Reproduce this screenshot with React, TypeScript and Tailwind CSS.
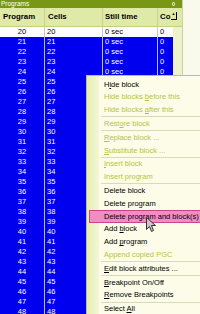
import React from "react";

const rows = Array.from({ length: 29 }, (_, i) => 20 + i);

type MenuItem = {
  pre: string;
  u?: string;
  post?: string;
  disabled?: boolean;
  active?: boolean;
  sepAfter?: boolean;
};

const menu: MenuItem[] = [
  { pre: "H", u: "i", post: "de block" },
  { pre: "Hide blocks ", u: "b", post: "efore this", disabled: true },
  { pre: "Hide blocks ", u: "a", post: "fter this", disabled: true, sepAfter: true },
  { pre: "Rest", u: "o", post: "re block", disabled: true, sepAfter: true },
  { pre: "", u: "R", post: "eplace block ...", disabled: true },
  { pre: "", u: "S", post: "ubstitute block ...", disabled: true, sepAfter: true },
  { pre: "", u: "I", post: "nsert block", disabled: true },
  { pre: "Insert program", disabled: true, sepAfter: true },
  { pre: "Delete block" },
  { pre: "Delete program" },
  { pre: "Delete program and block(s)", active: true },
  { pre: "Add ", u: "b", post: "lock" },
  { pre: "Add ", u: "p", post: "rogram" },
  { pre: "Append copied PGC", disabled: true, sepAfter: true },
  { pre: "", u: "E", post: "dit block attributes ...", sepAfter: true },
  { pre: "", u: "B", post: "reakpoint On/Off" },
  { pre: "", u: "R", post: "emove Breakpoints", sepAfter: true },
  { pre: "Select ", u: "A", post: "ll" },
];

export default function App() {
  return (
    <div
      className="relative w-[200px] h-[314px] overflow-hidden bg-[#f9faec] flex"
      style={{ fontFamily: '"Liberation Sans", Arial, sans-serif' }}
    >
      {/* Programs panel */}
      <div className="w-[183px] h-full flex flex-col bg-[#eef3cc] border-r border-[#c9d49a]">
        {/* Title bar */}
        <div className="h-[8px] bg-[#789815] flex items-center justify-between px-[1px] shrink-0">
          <span className="text-white text-[6.5px] leading-none">Programs</span>
          <span className="w-[3px] h-[4px] rounded-full border border-white mr-[6px]" />
        </div>

        {/* Header */}
        <div className="h-[19px] flex items-center bg-[#e0eaa8] text-black font-bold text-[7.8px] shrink-0 border-b border-[#c4d080]">
          <div className="w-[45px] pl-[3px] border-r border-[#c8d48c] h-full flex items-center">Program</div>
          <div className="w-[58px] pl-[3px] border-r border-[#c8d48c] h-full flex items-center">Cells</div>
          <div className="w-[55px] pl-[2px] border-r border-[#c8d48c] h-full flex items-center">Still time</div>
          <div className="w-[19px] pl-[2px] h-full flex items-center relative overflow-hidden">
            <span>Co</span>
            <span className="absolute right-0 top-[4px] w-[6px] h-[8px] border-r border-b border-black flex items-start justify-center text-[4px] leading-none bg-[#e0eaa8]">
              ▲
            </span>
          </div>
        </div>

        {/* Rows */}
        <div className="flex flex-col text-[7.5px]">
          {rows.map((n, i) => {
            const sel = i > 0;
            // rows from 25 on lie under the context menu on the right
            const covered = n >= 25;
            const line = sel ? "border-[#b8b8ff]" : "border-[#c8c8c8]";
            return (
              <div
                key={n}
                className={`h-[10px] w-[173px] flex items-center leading-none ${
                  sel ? "bg-[#0000ee] text-white" : "bg-white text-black"
                }`}
              >
                <div className={`w-[45px] h-full flex items-center justify-center border-r ${line}`}>{n}</div>
                <div className={`w-[58px] h-full flex items-center pl-[2px] border-r ${line}`}>{n}</div>
                <div className={`w-[55px] h-full flex items-center pl-[2px] border-r ${line}`}>
                  {covered ? "" : "0 sec"}
                </div>
                <div className="w-[15px] h-full flex items-center pl-[2px]">{covered ? "" : "0"}</div>
              </div>
            );
          })}
        </div>
      </div>

      {/* Context menu */}
      <div className="absolute left-[86px] top-[75px] w-[130px] bg-[#fcfce9] border border-[#b9c08e] flex text-[7.5px] leading-none">
        <div className="w-[12px] bg-gradient-to-r from-[#e6edb4] to-[#f4f7d6] shrink-0" />
        <div className="flex-1 flex flex-col pt-[2px]">
          {menu.map((m, i) => (
            <React.Fragment key={i}>
              <div
                className={`h-[12.8px] flex items-center -ml-[10px] ${
                  m.active ? "bg-[#f48ac6] border border-[#c8458a] pl-[14px]" : "pl-[15px]"
                } ${m.disabled ? "text-[#b5c43e]" : "text-black"}`}
              >
                <span className="whitespace-nowrap">
                  {m.pre}
                  {m.u && <span className="underline">{m.u}</span>}
                  {m.post}
                </span>
              </div>
              {m.sepAfter && <div className="h-px bg-[#d7dcb4] ml-[2px]" />}
            </React.Fragment>
          ))}
        </div>
      </div>

      {/* Mouse cursor */}
      <svg className="absolute left-[146px] top-[217px]" width="10" height="16" viewBox="0 0 10 16">
        <path
          d="M0.5 0.5 L0.5 12.5 L3.5 9.5 L5.5 14.5 L7.5 13.5 L5.5 8.5 L9.5 8.5 Z"
          fill="#c8c8c8"
          stroke="#333"
          strokeWidth="1"
        />
      </svg>
    </div>
  );
}
